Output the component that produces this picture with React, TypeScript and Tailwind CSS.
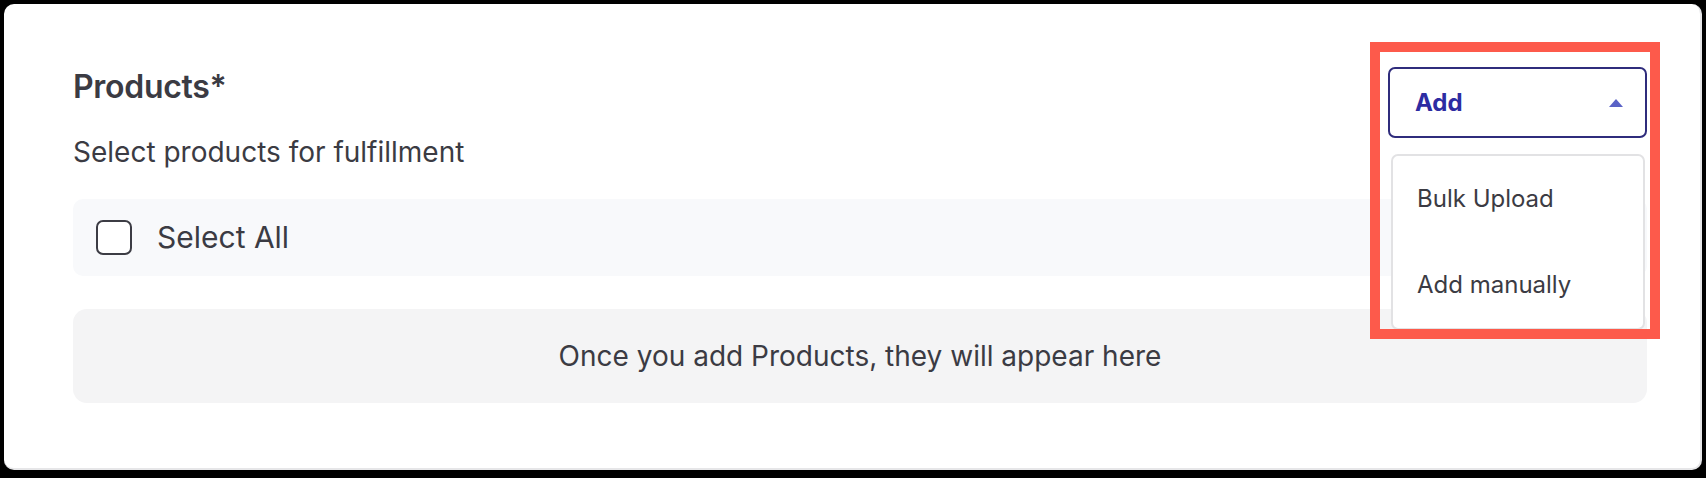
export default function App() {
  return (
    <div className="bg-black w-[1706px] h-[478px] pt-[4px] px-[4px] pb-[8px]" style={{ fontFamily: "Inter, 'Noto Sans', sans-serif" }}>
      <div className="bg-white h-full rounded-[10px] border-r-2 border-b-2 border-[#e6e6e8] pt-[63px] pl-[69px] pr-[53px] relative">
        {/* header */}
        <div className="flex justify-between items-start">
          <div className="mt-[5px] text-[#3b3b43]">
            <h2 className="text-[32px] leading-[30px] font-semibold tracking-[-0.3px]">Products*</h2>
            <p className="mt-[34px] text-[28px] leading-[32px]">Select products for fulfillment</p>
          </div>

          <div className="relative">
            <button className="w-[259px] h-[71px] border-2 border-[#2f2c7c] rounded-[7px] flex items-center justify-between pl-[25px] pr-[22px] bg-white">
              <span className="text-[24px] font-bold text-[#2d2ca2]">Add</span>
              <svg width="14" height="8" viewBox="0 0 14 8">
                <path d="M7 0 L14 8 L0 8 Z" fill="#5a62c6" />
              </svg>
            </button>

            {/* menu */}
            <div className="absolute top-[87px] left-[3px] w-[254px] h-[176px] bg-white border-2 border-[#e2e2e4] rounded-[7px] flex flex-col text-[24px] text-[#3b3b43]">
              <div className="h-[86px] flex items-center pl-[24px]">Bulk Upload</div>
              <div className="h-[86px] flex items-center pl-[24px]">Add manually</div>
            </div>

            {/* highlight */}
            <div className="absolute -top-[25px] -left-[18px] w-[290px] h-[297px] border-[10px] border-[#fd5a4b] pointer-events-none"></div>
          </div>
        </div>

        {/* select all */}
        <div className="mt-[31px] h-[77px] rounded-[10px] bg-[#f8f9fb] flex items-center pl-[23px] gap-[25px]">
          <div className="w-[36px] h-[35px] border-2 border-[#3c3c44] rounded-[7px] bg-white"></div>
          <span className="text-[30px] text-[#3b3b43]">Select All</span>
        </div>

        {/* empty state */}
        <div className="mt-[33px] h-[94px] rounded-[14px] bg-[#f4f4f5] flex items-center justify-center">
          <span className="text-[28px] text-[#3b3b43]">Once you add Products, they will appear here</span>
        </div>
      </div>
    </div>
  );
}
